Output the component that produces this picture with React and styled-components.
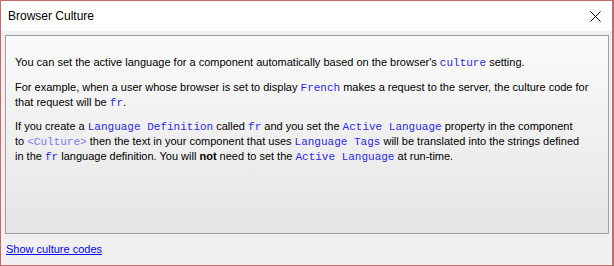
import React from 'react';
import styled, { createGlobalStyle } from 'styled-components';

const GlobalStyle = createGlobalStyle`
  html, body {
    margin: 0;
    padding: 0;
    background: #f0f0f0;
  }
`;

const Window = styled.div`
  width: 614px;
  height: 266px;
  box-sizing: border-box;
  border: 1px solid #c46a6a;
  border-right-width: 2px;
  display: flex;
  flex-direction: column;
  font-family: "Liberation Sans", Arial, sans-serif;
  font-size: 11px;
  color: #000;
  background: #f0f0f0;
`;

const TitleBar = styled.div`
  height: 30px;
  flex: none;
  background: #fff;
  display: flex;
  align-items: center;
  justify-content: space-between;
  padding: 0 11px 0 7px;
`;

const Title = styled.span`
  font-size: 12px;
  padding-bottom: 1px;
`;

const CloseButton = styled.svg`
  width: 11px;
  height: 11px;
`;

const Body = styled.div`
  flex: 1;
  display: flex;
  flex-direction: column;
  padding: 4px 3px 0 4px;
`;

const Panel = styled.div`
  height: 199px;
  box-sizing: border-box;
  border: 1px solid #a0a0a0;
  background: linear-gradient(to bottom, #fbfbfb, #e5e5e5);
  padding: 19px 9px 0 9px;
`;

const Para = styled.p`
  margin: 0 0 9.5px 0;
  line-height: 14px;
  white-space: nowrap;
`;

const Code = styled.code`
  font-family: "Liberation Mono", "Courier New", monospace;
  font-size: 11px;
  color: ${p => (p.$light ? '#7b7bf5' : '#2a2aee')};
`;

const Link = styled.a`
  margin: 9px 0 0 1px;
  color: #0000ff;
  text-decoration: underline;
  font-size: 11px;
  cursor: pointer;
`;

export default function App() {
  return (
    <>
      <GlobalStyle />
      <Window>
        <TitleBar>
          <Title>Browser Culture</Title>
          <CloseButton viewBox="0 0 11 11">
            <path d="M0.5 0.5 L10.5 10.5 M10.5 0.5 L0.5 10.5" stroke="#000" strokeWidth="1" fill="none" />
          </CloseButton>
        </TitleBar>
        <Body>
          <Panel>
            <Para>
              You can set the active language for a component automatically based on the browser's <Code>culture</Code> setting.
            </Para>
            <Para>
              For example, when a user whose browser is set to display <Code>French</Code> makes a request to the server, the culture code for
              <br />
              that request will be <Code>fr</Code>.
            </Para>
            <Para>
              If you create a <Code>Language Definition</Code> called <Code>fr</Code> and you set the <Code>Active Language</Code> property in the component
              <br />
              to <Code $light>&lt;Culture&gt;</Code> then the text in your component that uses <Code>Language Tags</Code> will be translated into the strings defined
              <br />
              in the <Code>fr</Code> language definition. You will <b>not</b> need to set the <Code>Active Language</Code> at run-time.
            </Para>
          </Panel>
          <Link>Show culture codes</Link>
        </Body>
      </Window>
    </>
  );
}
